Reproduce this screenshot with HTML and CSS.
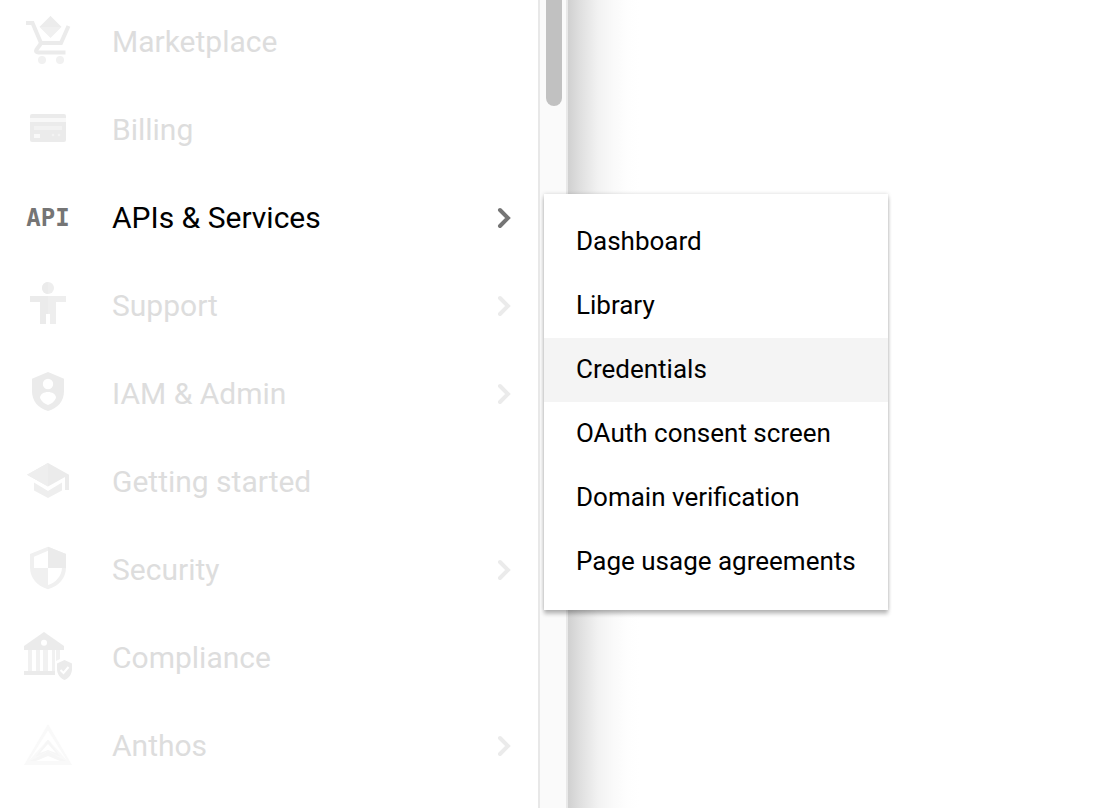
FILE: index.html
```html
<!DOCTYPE html>
<html lang="en">
<head>
<meta charset="utf-8">
<title>Navigation menu</title>
<link rel="stylesheet" href="styles.css">
</head>
<body>
<div class="page">
  <nav class="sidebar" aria-label="Products">
    <ul class="nav-list">
      <li><a class="nav-item" href="#marketplace">
        <svg class="icon" viewBox="0 0 48 48" aria-hidden="true"><g fill="none" stroke="#ebebeb" stroke-width="4"><path d="M2 7h6.500l8.500 20h20L44.500 10"/><path d="M16.500 28l-4 5.500q-1.500 3 2 3H41.500"/></g><path d="M26.500 0l11 11-11 11-11-11z" fill="#f0f0f0"/><path d="M26.500 0l11 11h-22z" fill="#ececec"/><circle cx="18" cy="44" r="4" fill="#f1f1f1"/><circle cx="36" cy="44" r="4" fill="#f1f1f1"/></svg>
        <span class="label">Marketplace</span></a></li>
      <li><a class="nav-item" href="#billing">
        <svg class="icon" viewBox="0 0 48 48" aria-hidden="true"><rect x="6" y="10" width="36" height="28" rx="2" fill="#ebebeb"/><path d="M6 14h36v4H6z" fill="#f8f8f8"/><path d="M10 22h28v4H10z" fill="#f2f2f2"/><path d="M10 30h6v4h-6z" fill="#f9f9f9"/><circle cx="29" cy="31" r="1.300" fill="#f3f3f3"/><circle cx="35" cy="31" r="1.300" fill="#f3f3f3"/></svg>
        <span class="label">Billing</span></a></li>
      <li><a class="nav-item active" href="#apis" aria-expanded="true">
        <svg class="icon" viewBox="0 0 48 48" aria-hidden="true"><text class="api-mark" x="24" y="34" text-anchor="middle">API</text></svg>
        <span class="label">APIs &amp; Services</span>
        <svg class="chevron" viewBox="0 0 16 24" aria-hidden="true"><path d="M4 4l8 8-8 8"/></svg></a></li>
      <li><a class="nav-item" href="#support">
        <svg class="icon" viewBox="0 0 48 48" aria-hidden="true"><circle cx="24" cy="8" r="6" fill="#eee"/><path d="M24 2a6 6 0 0 0 0 12z" fill="#ebebeb"/><path d="M6 16h36v6H32v22h-6V34h-4v10h-6V22H6z" fill="#eee"/><path d="M6 16h18v18h-2v10h-6V22H6z" fill="#ebebeb"/></svg>
        <span class="label">Support</span>
        <svg class="chevron" viewBox="0 0 16 24" aria-hidden="true"><path d="M4 4l8 8-8 8"/></svg></a></li>
      <li><a class="nav-item" href="#iam">
        <svg class="icon" viewBox="0 0 48 48" aria-hidden="true"><path d="M24 4l16 6.700V23c0 10-6 17-16 20C14 40 8 33 8 23V10.700z" fill="#ebebeb"/><circle cx="24" cy="16" r="5.200" fill="#fff"/><path d="M16 30c0-8 16-8 16 0-2 4-5 6-8 7-3-1-6-3-8-7z" fill="#fff"/></svg>
        <span class="label">IAM &amp; Admin</span>
        <svg class="chevron" viewBox="0 0 16 24" aria-hidden="true"><path d="M4 4l8 8-8 8"/></svg></a></li>
      <li><a class="nav-item" href="#start">
        <svg class="icon" viewBox="0 0 48 48" aria-hidden="true"><path d="M24 7l21 11.700V34h-4V21L24 30.500 3 18.700z" fill="#ebebeb"/><path d="M24 7v23.500L3 18.700z" fill="#eee"/><path d="M10 26.500L24 35l14-8.500v8L24 42l-14-7.500z" fill="#eee"/></svg>
        <span class="label">Getting started</span></a></li>
      <li><a class="nav-item" href="#security">
        <svg class="icon" viewBox="0 0 48 48" aria-hidden="true"><path d="M24 2.700L42 10v13c0 11-7 19-18 22.300C13 42 6 34 6 23V10z" fill="#f0f0f0"/><path d="M24 2.700L42 10v14H24z" fill="#ebebeb"/><path d="M24 6.700V24H10V12.700zM24 24h14c-.5 8-6 14.500-14 17z" fill="#fff"/></svg>
        <span class="label">Security</span>
        <svg class="chevron" viewBox="0 0 16 24" aria-hidden="true"><path d="M4 4l8 8-8 8"/></svg></a></li>
      <li><a class="nav-item" href="#compliance">
        <svg class="icon" viewBox="0 0 48 48" aria-hidden="true"><path d="M4 18h4v21H4zM12 18h4v21h-4zM19 18h5v21h-5zM28 18h3v21h-3zM32 18h4v9l-4 2z" fill="#f1f1f1"/><path d="M20 0l20 14v4H0v-4z" fill="#ebebeb"/><circle cx="20" cy="10.700" r="3" fill="#fff"/><path d="M0 39h31v4H0z" fill="#ebebeb"/><path d="M40.500 28l7.500 3.500V37c0 5-3 9-7.500 11-4.500-2-7.500-6-7.500-11v-5.500z" fill="#ebebeb"/><path d="M36.500 38l3 3 5-6" fill="none" stroke="#fff" stroke-width="2"/></svg>
        <span class="label">Compliance</span></a></li>
      <li><a class="nav-item" href="#anthos">
        <svg class="icon" viewBox="0 0 48 48" aria-hidden="true"><path d="M24 4l24 41H0z" fill="#f9f9f9"/><path d="M24 10.500l19 30L24 19.500 5 40.500z" fill="#fff"/><path d="M24 19.500L36.500 37 24 31 11.500 37z" fill="#f6f6f6"/><path d="M24 24l8 9-8-3-8 3z" fill="#fff"/><path d="M24 31.500L42 41H6z" fill="#f6f6f6"/><path d="M24 36l12 5H12z" fill="#fff"/></svg>
        <span class="label">Anthos</span>
        <svg class="chevron" viewBox="0 0 16 24" aria-hidden="true"><path d="M4 4l8 8-8 8"/></svg></a></li>
    </ul>
    <div class="scroll-track"><div class="scroll-thumb"></div></div>
    <ul class="submenu">
      <li><a class="sub-item" href="#dashboard">Dashboard</a></li>
      <li><a class="sub-item" href="#library">Library</a></li>
      <li><a class="sub-item current" href="#credentials">Credentials</a></li>
      <li><a class="sub-item" href="#consent">OAuth consent screen</a></li>
      <li><a class="sub-item" href="#domain">Domain verification</a></li>
      <li><a class="sub-item" href="#agreements">Page usage agreements</a></li>
    </ul>
  </nav>
  <main class="content"></main>
</div>
</body>
</html>
```
FILE: styles.css
```css
* { box-sizing: border-box; }
body {
  margin: 0;
  background: #fff;
  font-family: Roboto, "Liberation Sans", sans-serif;
}
ul { margin: 0; padding: 0; list-style: none; }
a { color: inherit; text-decoration: none; }
.page { display: flex; height: 100vh; overflow: hidden; }
.sidebar { position: relative; display: flex; flex: none; }
.nav-list { width: 538px; margin-top: -2px; }
.nav-item {
  display: flex;
  align-items: center;
  height: 88px;
  padding: 0 26px 0 24px;
  color: #ddd;
  font-size: 30px;
}
.icon { width: 48px; height: 48px; margin: 0 40px 4px 0; }
.label { flex: 1; padding-bottom: 2px; }
.chevron {
  width: 16px;
  height: 24px;
  fill: none;
  stroke: #ebebeb;
  stroke-width: 4;
  stroke-linecap: round;
}
.active { color: #000; }
.active .chevron { stroke: #757575; }
.api-mark {
  fill: #757575;
  font: bold 24px "DejaVu Sans Mono", monospace;
}
.scroll-track {
  width: 30px;
  padding: 0 4px 0 6px;
  background: #fafafa;
  border: solid #e8e8e8;
  border-width: 0 2px;
}
.scroll-thumb {
  height: 106px;
  background: #c1c1c1;
  border-radius: 0 0 8px 8px;
}
.submenu {
  position: absolute;
  top: 194px;
  left: 544px;
  width: 344px;
  padding: 16px 0;
  background: #fff;
  box-shadow: 0 4px 4px rgba(0, 0, 0, .24), 0 0 4px rgba(0, 0, 0, .16);
}
.sub-item {
  display: flex;
  align-items: center;
  height: 64px;
  padding: 0 32px 2px;
  color: #000;
  font-size: 26px;
  white-space: nowrap;
}
.current { background: #f4f4f4; }
.content {
  flex: 1;
  background: linear-gradient(to right, #d0d0d0, #dfdfdf 12px, #f2f2f2 30px, #fafafa 46px, #fefefe 60px, #fff 72px);
}
```
